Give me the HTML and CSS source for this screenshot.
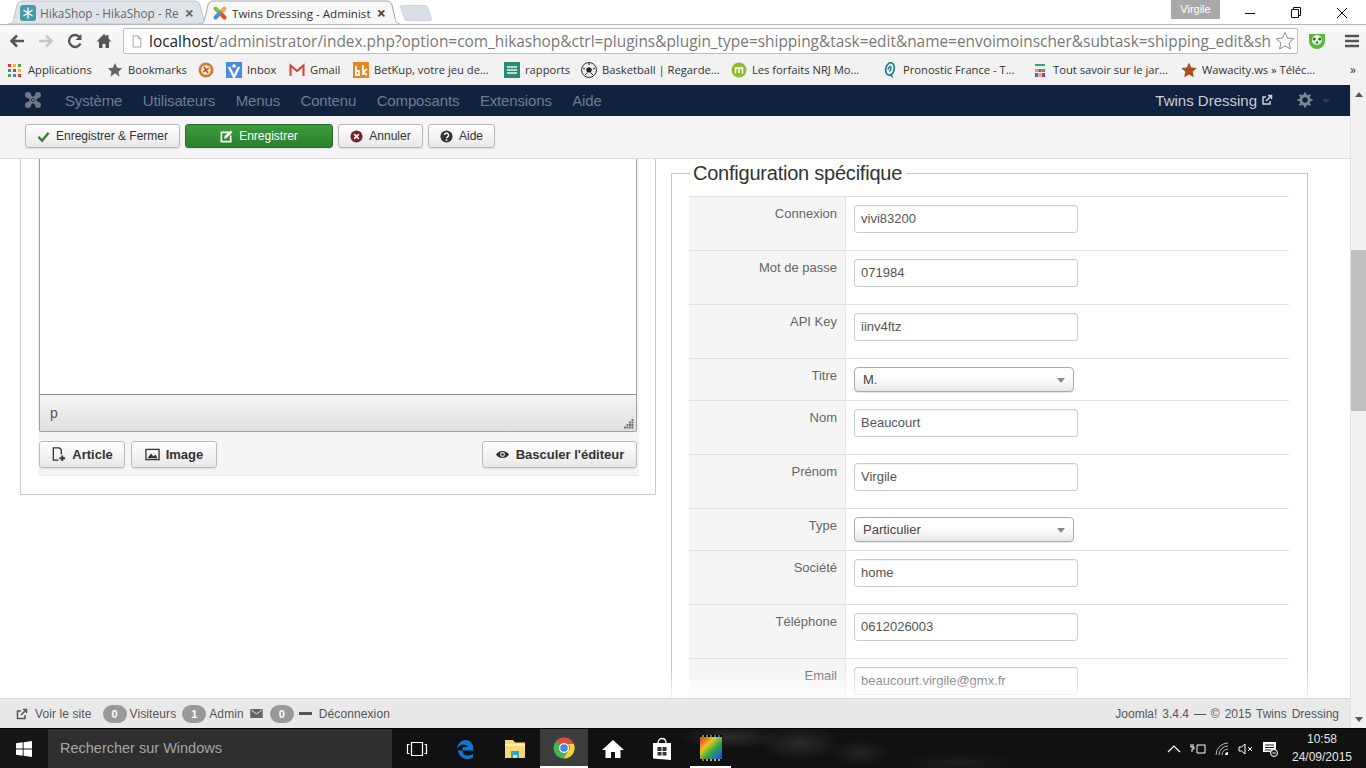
FILE: index.html
```html
<!DOCTYPE html>
<html lang="fr">
<head>
<meta charset="utf-8">
<title>Twins Dressing - Administration</title>
<link rel="stylesheet" href="styles.css">
</head>
<body>
<div class="tabstrip">
  <div class="tab tab-off">
    <svg class="tabshape" viewBox="0 0 197 24"><path d="M0 24c4 0 5-2 6-6L9 5c1-3 3-4 6-4h171c3 0 5 1 6 4l5 19z" fill="#dfe3ea" stroke="#bfc3ca"/></svg>
    <svg class="fav" viewBox="0 0 16 16"><rect width="16" height="16" rx="3" fill="#4a9aa8"/><path d="M8 2.500v11M3.500 5l9 6M12.500 5l-9 6" stroke="#fff" stroke-width="1.300"/></svg>
    <span class="tab-title">HikaShop - HikaShop - Re</span><span class="tab-x">×</span>
  </div>
  <div class="tab tab-on">
    <svg class="tabshape" viewBox="0 0 201 25"><path d="M0 24c4 0 5-2 6-6L9 5c1-3 3-4 6-4h172c3 0 5 1 6 4l3 13c1 4 2 6 5 6" fill="#f8f8f8" stroke="#a8a8a8"/></svg>
    <svg class="fav" viewBox="0 0 16 16"><path d="M8 8L3.500 3.500" stroke="#7ac143" stroke-width="4" stroke-linecap="round"/><path d="M8 8l4.500-4.500" stroke="#f9a541" stroke-width="4" stroke-linecap="round"/><path d="M8 8l4.500 4.500" stroke="#f44321" stroke-width="4" stroke-linecap="round"/><path d="M8 8l-4.500 4.500" stroke="#5091cd" stroke-width="4" stroke-linecap="round"/></svg>
    <span class="tab-title">Twins Dressing - Administ</span><span class="tab-x">×</span>
  </div>
  <div class="tab-new"></div>
  <div class="winbar">
    <span class="user">Virgile</span>
    <svg class="win" viewBox="0 0 46 24"><path d="M18 13.500h10" stroke="#111"/></svg>
    <svg class="win" viewBox="0 0 46 24"><path d="M18.500 9.500h7v8h-7zM20.500 9.500v-2h7v8h-2" fill="none" stroke="#111"/></svg>
    <svg class="win" viewBox="0 0 46 24"><path d="M18 8l10 10M28 8L18 18" stroke="#111"/></svg>
  </div>
</div>
<div class="toolbar">
  <svg class="tool" viewBox="0 0 18 18"><path d="M16 9H4M9 3.500L3.500 9 9 14.500" fill="none" stroke="#555" stroke-width="2.600"/></svg>
  <svg class="tool" viewBox="0 0 18 18"><path d="M2 9h12M9 3.500L14.500 9 9 14.500" fill="none" stroke="#c8c8c8" stroke-width="2.600"/></svg>
  <svg class="tool" viewBox="0 0 18 18"><path d="M14.500 11.500A6 6 0 1 1 14 5.500" fill="none" stroke="#555" stroke-width="2.400"/><path d="M15.500 2v6h-6z" fill="#555"/></svg>
  <svg class="tool" viewBox="0 0 18 18"><path d="M9 2L1.500 9.500H4V16h3.500v-4h3v4H14V9.500h2.500L13.500 6.500V3h-2v1.500z" fill="#555"/></svg>
  <div class="omnibox">
    <svg class="pageicon" viewBox="0 0 14 16"><path d="M2.500 1.500h6l3 3v10h-9zM8.500 1.500v3h3" fill="none" stroke="#999"/></svg>
    <span class="url"><span class="host">localhost</span>/administrator/index.php?option=com_hikashop&amp;ctrl=plugins&amp;plugin_type=shipping&amp;task=edit&amp;name=envoimoinscher&amp;subtask=shipping_edit&amp;sh</span>
    <svg class="staricon" viewBox="0 0 20 20"><path d="M10 1.500l2.600 5.600 6 .7-4.500 4.100 1.300 6L10 14.900l-5.400 3 1.300-6L1.400 7.800l6-.7z" fill="none" stroke="#888"/></svg>
  </div>
  <svg class="ext" viewBox="0 0 20 20"><path d="M2 3h16v7a8 8 0 0 1-16 0z" fill="#5cb83c"/><circle cx="10" cy="9" r="5" fill="#eaf7e2"/><circle cx="7.200" cy="8" r="1.500" fill="#2d6a1c"/><circle cx="12.800" cy="8" r="1.500" fill="#2d6a1c"/><circle cx="10" cy="11.500" r="1.200" fill="#2d6a1c"/></svg>
  <svg class="menu" viewBox="0 0 16 16"><path d="M1 3h14M1 8h14M1 13h14" stroke="#555" stroke-width="2.400"/></svg>
</div>
<div class="bookmarks">
  <a class="bm"><svg class="bi" viewBox="0 0 16 16"><path d="M1 2h3v3H1z" fill="#e33"/><path d="M6 2h3v3H6z" fill="#fb0"/><path d="M11 2h3v3h-3z" fill="#4a4"/><path d="M1 7h3v3H1z" fill="#38d"/><path d="M6 7h3v3H6z" fill="#e33"/><path d="M11 7h3v3h-3z" fill="#fb0"/><path d="M1 12h3v3H1z" fill="#4a4"/><path d="M6 12h3v3H6z" fill="#38d"/><path d="M11 12h3v3h-3z" fill="#e33"/></svg>Applications</a>
  <a class="bm"><svg class="bi" viewBox="0 0 16 16"><path d="M8 1l2.200 4.700 5 .6-3.700 3.400 1 5L8 11.300 3.500 14.700l1-5L.8 6.300l5-.6z" fill="#666"/></svg>Bookmarks</a>
  <a class="bm"><svg class="bi" viewBox="0 0 16 16"><circle cx="8" cy="8" r="7.500" fill="#d47a30"/><circle cx="8" cy="8" r="4.800" fill="#f6e6d2"/><path d="M5 10l6-4M6 5l4 6" stroke="#b5482c" stroke-width="1.400"/></svg></a>
  <a class="bm"><svg class="bi" viewBox="0 0 16 16"><rect width="16" height="16" fill="#4a8ae0"/><path d="M3 5l5 10 5-10" fill="none" stroke="#fff" stroke-width="2.400"/><circle cx="8" cy="4" r="1.800" fill="#fff"/></svg>Inbox</a>
  <a class="bm"><svg class="bi" viewBox="0 0 16 16"><path d="M1 3h14v11H1z" fill="#f2f2f2"/><path d="M1.500 14V3.500L8 9l6.500-5.500V14" fill="none" stroke="#d9412f" stroke-width="2"/></svg>Gmail</a>
  <a class="bm"><svg class="bi" viewBox="0 0 16 16"><rect width="16" height="16" fill="#e8871e"/><path d="M3 4v9h3V9H3M10 3v10M14 7l-4 3 4 3" fill="none" stroke="#fff" stroke-width="1.800"/></svg>BetKup, votre jeu de...</a>
  <a class="bm"><svg class="bi" viewBox="0 0 16 16"><rect width="16" height="16" fill="#2b8a72"/><path d="M3 5h10M3 8h10M3 11h10" stroke="#e7f3ef" stroke-width="1.300"/></svg>rapports</a>
  <a class="bm"><svg class="bi" viewBox="0 0 16 16"><circle cx="8" cy="8" r="7.500" fill="#eee" stroke="#333"/><path d="M8 5l3 2-1 3.500H6L5 7z" fill="#222"/><path d="M8 1v2M2 6l2 1M14 6l-2 1M4 13l2-2M12 13l-2-2" stroke="#222"/></svg>Basketball | Regarde...</a>
  <a class="bm"><svg class="bi" viewBox="0 0 16 16"><circle cx="8" cy="8" r="7.500" fill="#8dbb2e"/><path d="M4.500 11.500V6h7v5.500M8 6v5" fill="none" stroke="#fff" stroke-width="1.500"/></svg>Les forfaits NRJ Mo...</a>
  <a class="bm"><svg class="bi" viewBox="0 0 16 16"><ellipse cx="8" cy="7" rx="4.200" ry="6.300" fill="none" stroke="#1c7d86" stroke-width="1.700" transform="rotate(12 8 7)"/><path d="M6 7.500c1-3 3-4 3-2S8 9 7 9M8 12l3 3.500" fill="none" stroke="#1c7d86" stroke-width="1.400"/></svg>Pronostic France - T...</a>
  <a class="bm"><svg class="bi" viewBox="0 0 16 16"><rect x="2" y="1" width="12" height="15" fill="#eee"/><path d="M3 3h10" stroke="#3a7" stroke-width="2"/><path d="M3 7h3v3H3z" fill="#e8a33d"/><path d="M6.500 7h3v3h-3z" fill="#d33"/><path d="M10 7h3v3h-3z" fill="#4a4"/><path d="M3 11h3v4H3z" fill="#37c"/><path d="M6.500 11h3v4h-3z" fill="#e8a33d"/><path d="M10 11h3v4h-3z" fill="#93c"/></svg>Tout savoir sur le jar...</a>
  <a class="bm"><svg class="bi" viewBox="0 0 16 16"><path d="M8 .5l2.300 5 5.400.6-4 3.700 1.100 5.400L8 12.500l-4.800 2.700 1.100-5.400-4-3.700 5.400-.6z" fill="#a8501c"/></svg>Wawacity.ws » Téléc...</a>
  <span class="more">»</span>
</div>
<div class="app">
  <div class="page">
    <nav class="adminnav">
      <svg class="jlogo" viewBox="0 0 18 18"><path d="M5 5l8 8M13 5l-8 8" stroke="#6f7a86" stroke-width="4.400"/><circle cx="4" cy="4" r="3" fill="#6f7a86"/><circle cx="14" cy="4" r="3" fill="#6f7a86"/><circle cx="4" cy="14" r="3" fill="#6f7a86"/><circle cx="14" cy="14" r="3" fill="#6f7a86"/><path d="M7 9l2-2 2 2-2 2z" fill="none" stroke="#10223e" stroke-width=".8"/></svg>
      <span class="navlink">Système</span>
      <span class="navlink">Utilisateurs</span>
      <span class="navlink">Menus</span>
      <span class="navlink">Contenu</span>
      <span class="navlink">Composants</span>
      <span class="navlink">Extensions</span>
      <span class="navlink">Aide</span>
      <span class="sitename">Twins Dressing</span>
      <svg class="extlink" viewBox="0 0 12 12"><path d="M9 7v3H2V3h3" fill="none" stroke="#ccd3dc" stroke-width="1.500"/><path d="M5 7l5-5M7 1.500h3.500V5" fill="none" stroke="#ccd3dc" stroke-width="1.500"/></svg>
      <svg class="gear" viewBox="0 0 16 16"><circle cx="8" cy="8" r="4.200" fill="none" stroke="#7b8796" stroke-width="3"/><path d="M8 .5v3M8 12.500v3M.5 8h3M12.500 8h3M2.700 2.700l2.100 2.100M11.200 11.200l2.100 2.100M13.300 2.700l-2.100 2.100M4.800 11.200l-2.100 2.100" stroke="#7b8796" stroke-width="2.200"/></svg>
      <span class="caret"></span>
    </nav>
    <div class="subhead">
      <button class="btn btn-save-close"><svg class="bico" viewBox="0 0 14 14"><path d="M1.500 7.500L5.500 11.500 12.500 3" fill="none" stroke="#378137" stroke-width="2.600"/></svg>Enregistrer &amp; Fermer</button>
      <button class="btn btn-green"><svg class="bico" viewBox="0 0 14 14"><path d="M10 2.500H1.500v10h10V6" fill="none" stroke="#fff" stroke-width="1.800"/><path d="M5 6.500l6.500-6 2 2-6.500 6.500-2.500.5z" fill="#fff"/></svg>Enregistrer</button>
      <button class="btn btn-cancel"><svg class="bico" viewBox="0 0 14 14"><circle cx="7" cy="7" r="6.500" fill="#7a1f27"/><path d="M4.500 4.500l5 5M9.500 4.500l-5 5" stroke="#fff" stroke-width="1.800"/></svg>Annuler</button>
      <button class="btn btn-help"><svg class="bico" viewBox="0 0 14 14"><circle cx="7" cy="7" r="6.500" fill="#333"/><path d="M4.800 5.500a2.200 2.200 0 1 1 3.200 2C7.300 8 7 8.200 7 9" fill="none" stroke="#fff" stroke-width="1.600"/><path d="M6.100 10h1.800v1.700H6.100z" fill="#fff"/></svg>Aide</button>
    </div>
    <main class="content">
      <section class="leftcol">
        <div class="panel">
          <div class="editorwrap">
            <div class="editor">
              <div class="editarea"></div>
              <div class="statusbar"><span>p</span>
                <svg class="grip" viewBox="0 0 10 10"><path d="M7.500 0h2v2h-2zM5 2.500h2v2H5zM7.500 2.500h2v2h-2zM2.500 5h2v2h-2zM5 5h2v2H5zM7.500 5h2v2h-2zM0 7.500h2v2H0zM2.500 7.500h2v2h-2zM5 7.500h2v2H5zM7.500 7.500h2v2h-2z" fill="#777"/></svg>
              </div>
            </div>
            <div class="editbtns">
              <button class="btn2 btn-article"><svg class="bico2" viewBox="0 0 16 16"><path d="M11 8V3L9 1H2.500v13H8" fill="none" stroke="#333" stroke-width="1.400"/><path d="M12 9v6M9 12h6" stroke="#333" stroke-width="2"/></svg>Article</button>
              <button class="btn2 btn-image"><svg class="bico2" viewBox="0 0 16 16"><path d="M1 2.500h14v11H1z" fill="none" stroke="#333" stroke-width="1.400"/><path d="M2.500 12l4-5 2.500 3 2-2 2.500 4z" fill="#333"/></svg>Image</button>
              <button class="btn2 btn-toggle"><svg class="bico2" viewBox="0 0 16 16"><path d="M1 8c3-5 11-5 14 0-3 5-11 5-14 0z" fill="#333"/><circle cx="8" cy="8" r="2.600" fill="#eee"/><circle cx="8" cy="8" r="1.400" fill="#333"/></svg>Basculer l'éditeur</button>
            </div>
          </div>
        </div>
      </section>
      <section class="rightcol">
        <fieldset class="config">
          <legend>Configuration spécifique</legend>
          <div class="row"><label>Connexion</label><div class="cell"><span class="input">vivi83200</span></div></div>
          <div class="row"><label>Mot de passe</label><div class="cell"><span class="input">071984</span></div></div>
          <div class="row"><label>API Key</label><div class="cell"><span class="input">iinv4ftz</span></div></div>
          <div class="row row-sel"><label>Titre</label><div class="cell"><span class="select">M.</span></div></div>
          <div class="row"><label>Nom</label><div class="cell"><span class="input">Beaucourt</span></div></div>
          <div class="row"><label>Prénom</label><div class="cell"><span class="input">Virgile</span></div></div>
          <div class="row row-sel"><label>Type</label><div class="cell"><span class="select">Particulier</span></div></div>
          <div class="row"><label>Société</label><div class="cell"><span class="input">home</span></div></div>
          <div class="row"><label>Téléphone</label><div class="cell"><span class="input">0612026003</span></div></div>
          <div class="row"><label>Email</label><div class="cell"><span class="input">beaucourt.virgile@gmx.fr</span></div></div>
        </fieldset>
      </section>
      <div class="fade"></div>
    </main>
    <footer class="statusfoot">
      <svg class="fico" viewBox="0 0 12 12"><path d="M9 7v3.500H1.500V3H5" fill="none" stroke="#555" stroke-width="1.500"/><path d="M5 7l5-5M7 1.500h3.500V5" fill="none" stroke="#555" stroke-width="1.500"/></svg>
      <span class="ftext ft-site">Voir le site</span>
      <span class="badge">0</span><span class="ftext">Visiteurs</span>
      <span class="badge">1</span><span class="ftext">Admin</span>
      <svg class="fmail" viewBox="0 0 14 10"><path d="M0 0h14v10H0z" fill="#666"/><path d="M1 1l6 4.500L13 1" fill="none" stroke="#e8e8e8"/></svg>
      <span class="badge">0</span>
      <span class="fminus"></span>
      <span class="ftext">Déconnexion</span>
      <span class="fright">Joomla! 3.4.4 — © 2015 Twins Dressing</span>
    </footer>
  </div>
  <aside class="scrollbar">
    <span class="arr arr-up"></span>
    <span class="thumb"></span>
    <span class="arr arr-down"></span>
  </aside>
</div>
<div class="taskbar">
  <div class="startbtn"><svg class="winlogo" viewBox="0 0 16 16"><path d="M0 2.300L6.700 1.300V7.500H0zM7.600 1.200L16 0v7.500H7.600zM0 8.400h6.700v6.300L0 13.700zM7.600 8.400H16V16l-8.400-1.200z" fill="#fff"/></svg></div>
  <div class="search">Rechercher sur Windows</div>
  <div class="tb tb-view"><svg class="tbi" viewBox="0 0 24 24"><path d="M6.500 5.500h11v13h-11zM4.500 7.500H2.500v9h2M19.500 7.500h2v9h-2" fill="none" stroke="#fff" stroke-width="1.200"/></svg></div>
  <div class="tb tb-edge"><svg class="tbi" viewBox="0 0 24 24"><path d="M4 13.500h15.500C19.800 7 16 3 11.500 3 7 3 3.500 7 3 12c1.800-3 4-4.500 6.500-4.500 2.500 0 4 1.500 4.500 2.500H9C7.500 14 9 18 12.500 18.500c2.500.3 5-.5 6.500-1.500v3.500c-2 1.200-5 1.800-7.500 1.200C7 20.700 4.300 17.500 4 13.500z" fill="#0a78d7"/></svg></div>
  <div class="tb tb-files"><svg class="tbi" viewBox="0 0 24 24"><path d="M2 3h8l2 2.500h10V21H2z" fill="#f8d775"/><path d="M2 7h20v2H2z" fill="#fdeeb2"/><path d="M8 14h8v7h-2v-3h-4v3H8z" fill="#2aa6d8"/></svg></div>
  <div class="tb tb-chrome"><svg class="tbi" viewBox="0 0 24 24"><circle cx="12" cy="12" r="10.500" fill="#4caf50"/><path d="M12 1.500A10.500 10.500 0 0 1 21.800 8H12a4 4 0 0 0-3.600 2.300L4.800 4.400A10.500 10.500 0 0 1 12 1.500z" fill="#e04a3f"/><path d="M21.800 8A10.500 10.500 0 0 1 12 22.500L16 15a4 4 0 0 0 0-7z" fill="#fcd12e"/><circle cx="12" cy="12" r="5" fill="#fff"/><circle cx="12" cy="12" r="3.800" fill="#4a86e8"/></svg></div>
  <div class="tb tb-home"><svg class="tbi" viewBox="0 0 24 24"><path d="M12 3L1 13h3.500v8H10v-6h4v6h5.500v-8H23z" fill="#fff"/></svg></div>
  <div class="tb tb-store"><svg class="tbi" viewBox="0 0 24 24"><path d="M3 6h18v17l-18-1.500z" fill="#fff"/><path d="M8 6c0-6 8-6 8 0" fill="none" stroke="#fff" stroke-width="1.300"/><path d="M7.500 10h4v4h-4zM12.500 10h4v4h-4zM7.500 15h4v3.500h-4zM12.500 15h4v3.500h-4z" fill="#333"/></svg></div>
  <div class="tb tb-app"><span class="appicon"></span></div>
  <div class="tray">
    <svg class="ti" viewBox="0 0 16 16"><path d="M2 11l6-6 6 6" fill="none" stroke="#fff" stroke-width="1.200"/></svg>
    <svg class="ti" viewBox="0 0 16 16"><path d="M1 3v3M3 3v3M.5 6h3.500v2H2v3M7 4h8v8H7z" fill="none" stroke="#fff" stroke-width="1"/></svg>
    <svg class="ti" viewBox="0 0 16 16"><path d="M2 14A12 12 0 0 1 14 2M5 14A9 9 0 0 1 14 5M8 14a6 6 0 0 1 6-6" fill="none" stroke="#bbb"/><path d="M11 14a3 3 0 0 1 3-3v3z" fill="#fff"/></svg>
    <svg class="ti" viewBox="0 0 16 16"><path d="M1 6v4h2.500L7 13V3L3.500 6z" fill="none" stroke="#fff"/><path d="M10 6l4 4M14 6l-4 4" stroke="#fff"/></svg>
    <svg class="ti" viewBox="0 0 16 16"><path d="M1 1h13v10H1z" fill="#fff"/><path d="M3 4h9M3 6.500h9M3 9h6" stroke="#222"/><circle cx="12" cy="12" r="3.500" fill="#222" stroke="#fff"/><path d="M10.500 12h3" stroke="#fff"/></svg>
    <div class="clock"><span>10:58</span><span>24/09/2015</span></div>
  </div>
</div>
</body>
</html>
```
FILE: styles.css
```css
* { box-sizing: border-box; }
html, body { margin: 0; padding: 0; }
body {
  width: 1366px; height: 768px; overflow: hidden;
  display: flex; flex-direction: column;
  font-family: "Liberation Sans", Arial, sans-serif;
  font-size: 13px; color: #333; background: #fff;
}
svg { display: block; flex: none; }

/* browser chrome */
.tabstrip { height: 25px; display: flex; align-items: flex-start; background: #fff; border-bottom: 1px solid #b8b8b8; padding-left: 8px; flex: none; }
.tab { position: relative; height: 24px; display: flex; align-items: center; padding: 2px 0 0 12px; font-family: "Open Sans", sans-serif; flex: none; }
.tabshape { position: absolute; left: 0; top: 0; z-index: 0; }
.tab-off { width: 197px; color: #666; }
.tab-off .tabshape { width: 197px; height: 24px; }
.tab-on { width: 201px; height: 25px; margin-left: -6px; color: #333; padding-left: 13px; padding-top: 1px; }
.tab-on .tabshape { width: 201px; height: 25px; }
.fav { position: relative; width: 16px; height: 16px; margin-right: 4px; }
.tab-title { position: relative; white-space: nowrap; font-size: 11.800px; flex: none; }
.tab-on .tab-title { font-size: 11.600px; }
.tab-x { position: relative; font-size: 16px; font-weight: 700; color: #666; line-height: 16px; margin-left: auto; }
.tab-off .tab-x { margin-right: 11px; }
.tab-on .tab-x { margin-right: 14px; color: #444; }
.tab-new { width: 28px; height: 16px; margin: 5px 0 0 2px; background: #d8dde6; border: 1px solid #d0d4dc; border-radius: 3px; transform: skewX(18deg); flex: none; }
.winbar { margin-left: auto; height: 24px; display: flex; padding-right: 1px; }
.user { width: 49px; height: 19px; background: #a9a9a9; color: #fff; font-size: 11px; text-align: center; line-height: 18px; margin-right: 7px; }
.win { width: 46px; height: 24px; }

.toolbar { height: 32px; flex: none; display: flex; align-items: center; padding-left: 8px; background: linear-gradient(#f8f8f8, #f2f2f2); }
.tool { width: 18px; height: 18px; margin-right: 11px; }
.omnibox { width: 1175px; height: 26px; margin-left: -1px; background: #fff; border: 1px solid #bdbdbd; border-radius: 2px; display: flex; align-items: center; padding: 0 2px 0 7px; flex: none; }
.pageicon { width: 12px; height: 15px; margin-right: 6px; }
.url { white-space: nowrap; font-family: "Open Sans", sans-serif; font-size: 15.420px; color: #777; flex: none; }
.host { color: #222; }
.staricon { width: 20px; height: 20px; margin-left: auto; }
.ext { width: 20px; height: 20px; margin-left: 9px; }
.menu { width: 16px; height: 16px; margin-left: 17px; }

.bookmarks { height: 28px; flex: none; background: #f2f2f2; display: grid; align-items: center; padding-bottom: 3px;
  grid-template-columns: 100px 91px 28px 63px 64px 151px 77px 150px 151px 150px 149px 169px auto; padding-left: 7px; font-family: "Open Sans", sans-serif; font-size: 11.200px; color: #333; }
.bm { display: flex; align-items: center; white-space: nowrap; }
.bi { width: 16px; height: 16px; margin-right: 5px; }
.more { font-size: 12px; }

/* admin page */
.app { flex: 1; min-height: 0; display: flex; }
.page { width: 1350px; display: flex; flex-direction: column; flex: none; }
.adminnav { height: 31px; background: #10223e; display: flex; align-items: center; padding: 0 0 1px 24px; flex: none; font-size: 15px; }
.jlogo { width: 18px; height: 18px; margin-right: 23px; }
.navlink { color: #6d7c90; margin-right: 20.500px; white-space: nowrap; letter-spacing: -.15px; }
.sitename { margin-left: auto; color: #c8ced6; font-size: 15px; }
.extlink { width: 12px; height: 12px; margin: 0 0 0 4px; }
.gear { width: 16px; height: 16px; margin-left: 24px; }
.caret { width: 0; height: 0; border: 4px solid transparent; border-top-color: #2e3f58; border-bottom: 0; margin: 2px 20px 0 9px; }

.subhead { height: 43px; background: #f5f5f5; border-bottom: 1px solid #dcdcdc; display: flex; align-items: flex-start; padding: 8px 0 0 25px; gap: 5px; flex: none; }
.btn { height: 24px; padding: 0; border: 1px solid #b5b5b5; border-radius: 3px; background: linear-gradient(#fff, #e8e8e8); font: 12px "Liberation Sans", sans-serif; color: #333; display: flex; align-items: center; justify-content: center; box-shadow: 0 1px 1px rgba(0,0,0,.08); }
.bico { width: 13px; height: 13px; margin-right: 6px; }
.btn-save-close { width: 155px; }
.btn-green { width: 148px; background: linear-gradient(#3c9a3c, #2c812c); color: #fff; border-color: #2a6d2a; }
.btn-cancel { width: 85px; }
.btn-help { width: 67px; }

.content { flex: 1; min-height: 0; display: flex; align-items: flex-start; overflow: hidden; position: relative; background: #fff; padding-left: 20px; }
.leftcol { width: 636px; flex: none; }
.panel { height: 336px; border: 1px solid #ccc; border-top: 0; padding-left: 17px; padding-right: 16px; }
.editorwrap { height: 317px; background: #f5f5f5; border-bottom: 1px solid #eaeaea; padding: 0 2px 0 1px; }
.editor { height: 273px; border: 1px solid #a0a0a0; border-top: 0; border-radius: 0 0 2px 2px; display: flex; flex-direction: column; }
.editarea { height: 236px; background: #fff; border-bottom: 1px solid #8f8f8f; flex: none; }
.statusbar { flex: 1; background: linear-gradient(#f6f6f6, #dedede); padding: 10px 0 0 10px; font-size: 14px; color: #555; position: relative; }
.grip { width: 10px; height: 10px; position: absolute; right: 2px; bottom: 2px; }
.editbtns { display: flex; gap: 6px; margin-top: 9px; }
.btn2 { height: 27px; padding: 0; border: 1px solid #bbb; border-radius: 3px; background: linear-gradient(#fff, #e8e8e8); font: 700 13px "Liberation Sans", sans-serif; color: #333; display: flex; align-items: center; justify-content: center; box-shadow: 0 1px 1px rgba(0,0,0,.08); }
.bico2 { width: 15px; height: 15px; margin-right: 6px; }
.btn-article { width: 86px; }
.btn-image { width: 86px; }
.btn-toggle { width: 155px; margin-left: auto; }

.rightcol { width: 637px; margin-left: 15px; flex: none; }
.config { margin: 3px 0 0; padding: 12px 18px 0 17px; border: 1px solid #c4c4c4; min-width: 0; }
.config legend { margin-left: 1px; padding: 0 4px 0 3px; font-size: 20px; line-height: 22px; color: #333; letter-spacing: -.23px; }
.row { display: flex; height: 54px; border-top: 1px solid #e0e0e0; }
.row-sel { height: 42px; }
.row label { width: 157px; background: #f5f5f5; border-right: 1px solid #e6e6e6; text-align: right; padding: 9px 8px 0 0; color: #666; font-size: 13px; flex: none; }
.cell { padding: 8px 0 0 8px; }
.input { display: block; width: 224px; height: 28px; padding: 0 6px; line-height: 25px; border: 1px solid #ccc; border-radius: 3px; font-size: 13px; color: #555; box-shadow: inset 0 1px 1px rgba(0,0,0,.05); }
.select { display: block; position: relative; width: 220px; height: 25px; padding: 0 8px; line-height: 24px; border: 1px solid #aaa; border-radius: 4px; background: linear-gradient(#fff 40%, #e9e9e9); font-size: 13px; color: #444; box-shadow: 0 1px 1px rgba(0,0,0,.1); }
.select::after { content: ""; position: absolute; right: 8px; top: 10px; border: 4px solid transparent; border-top: 5px solid #888; border-bottom: 0; }
.fade { position: absolute; left: 0; right: 0; bottom: 0; height: 30px; background: linear-gradient(rgba(255,255,255,0), rgba(255,255,255,.8)); pointer-events: none; }

.statusfoot { height: 30px; flex: none; background: #e9e9e9; border-top: 1px solid #d4d4d4; display: flex; align-items: center; padding: 0 11px 0 16px; font-size: 12px; color: #555; }
.fico { width: 12px; height: 12px; margin-right: 7px; }
.ftext { white-space: nowrap; letter-spacing: .1px; }
.ft-site { margin-right: 11px; }
.badge { width: 24px; height: 18px; border-radius: 9px; background: #999; color: #fff; font-weight: 700; font-size: 11px; text-align: center; line-height: 18px; margin-right: 3px; flex: none; }
.ftext:not(.ft-site) { margin-right: 6px; }
.fmail { width: 13px; height: 9px; margin-right: 7px; }
.fminus { width: 13px; height: 3px; background: #555; margin: 0 7px 0 2px; flex: none; }
.fright { margin-left: auto; word-spacing: 1.600px; }

.scrollbar { width: 16px; flex: none; background: #f1f1f1; border-left: 1px solid #e3e3e3; position: relative; }
.arr { position: absolute; left: 4px; width: 0; height: 0; border: 4px solid transparent; }
.arr-up { top: 7px; border-top: 0; border-bottom: 5px solid #555; }
.arr-down { bottom: 6px; border-bottom: 0; border-top: 5px solid #555; }
.thumb { position: absolute; left: 0; right: 0; top: 165px; height: 161px; background: #bfbfbf; }

/* windows taskbar */
.taskbar { height: 40px; flex: none; display: flex; align-items: stretch; color: #fff; border-top: 1px solid #000;
  background:
    radial-gradient(ellipse 50px 12px at 730px 8px, #2b2b2b, transparent),
    radial-gradient(ellipse 40px 18px at 800px 14px, #2a2a2a, transparent),
    radial-gradient(ellipse 30px 14px at 860px 24px, #232323, transparent),
    radial-gradient(ellipse 60px 10px at 960px 34px, #1d1d1d, transparent),
    #111; }
.startbtn { width: 48px; display: flex; align-items: center; justify-content: center; background: #161616; }
.winlogo { width: 16px; height: 16px; }
.search { width: 344px; background: #2f2f2f; color: #a5a5a5; font-size: 14.500px; line-height: 39px; padding-left: 12px; }
.tb { width: 48px; display: flex; align-items: center; justify-content: center; flex: none; position: relative; }
.tbi { width: 24px; height: 24px; }
.tb-view { width: 50px; }
.tb-files { width: 50px; }
.tb-chrome { background: #3d3d3d; border-bottom: 2px solid #fff; }
.tb-home { width: 50px; }
.tb-app { border-bottom: 2px solid #fff; margin: 0 0 0 4px; width: 41px; }
.appicon { width: 22px; height: 26px; background: linear-gradient(135deg, #e4572e 10%, #e8c81e 35%, #2ea84a 60%, #1e5bd8 90%); border-top: 2px dotted #000; border-bottom: 2px dotted #000; }
.tray { margin-left: auto; display: flex; align-items: center; }
.ti { width: 16px; height: 16px; margin-right: 8px; }
.clock { width: 68px; margin: -1px 10px 0 2px; display: flex; flex-direction: column; align-items: center; font-size: 12px; line-height: 18px; color: #e6e6e6; }
```
